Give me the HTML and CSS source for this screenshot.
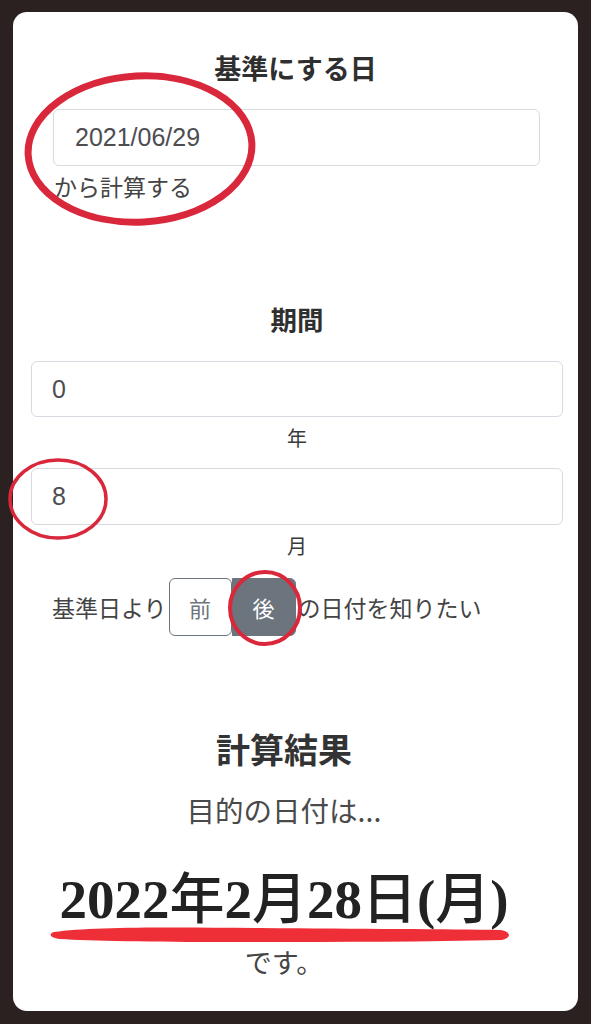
FILE: index.html
```html
<!DOCTYPE html>
<html lang="ja">
<head>
<meta charset="utf-8">
<title>日付計算</title>
<link rel="stylesheet" href="styles.css">
</head>
<body>
<div class="card">
  <section class="base">
    <h2 class="title">基準にする日</h2>
    <div class="field-narrow">
      <div class="input">2021/06/29</div>
      <p class="from">から計算する</p>
    </div>
  </section>

  <section class="period">
    <h2 class="title title-period">期間</h2>
    <div class="input input-wide first">0</div>
    <p class="unit">年</p>
    <div class="input input-wide second">8</div>
    <p class="unit">月</p>
    <div class="dir-row">
      <span>基準日より</span>
      <div class="btn-group">
        <span class="btn btn-outline">前</span>
        <span class="btn btn-active">後</span>
      </div>
      <span>の日付を知りたい</span>
    </div>
  </section>

  <section class="result">
    <h2 class="result-title">計算結果</h2>
    <p class="result-lead">目的の日付は...</p>
    <p class="result-date">2022<span class="kanji">年</span>2<span class="kanji">月</span>28<span class="kanji">日</span>(<span class="kanji">月</span>)</p>
    <p class="result-tail">です。</p>
  </section>
</div>

<svg class="marks" width="591" height="1024" viewBox="0 0 591 1024" aria-hidden="true">
  <ellipse cx="140" cy="149" rx="112" ry="73" fill="none" stroke="#d9283b" stroke-width="7" transform="rotate(-3 140 149)"/>
  <ellipse cx="58" cy="499" rx="48" ry="39" fill="none" stroke="#d9283b" stroke-width="3.5"/>
  <ellipse cx="265" cy="608" rx="35" ry="36" fill="none" stroke="#d9283b" stroke-width="4"/>
  <path d="M54 932 C 90 927, 160 927, 260 928 C 360 929, 450 929, 500 930 C 511 931, 512 938, 502 940 C 420 942, 330 942, 230 942 C 150 942, 90 941, 60 939 C 50 938, 48 934, 54 932 Z" fill="#ef2f38"/>
</svg>
</body>
</html>
```

FILE: styles.css
```css
html, body {
  margin: 0;
  padding: 0;
}

body {
  background: #2a2120;
  width: 591px;
  height: 1024px;
  overflow: hidden;
  position: relative;
  font-family: "Noto Sans CJK JP", "Liberation Sans", sans-serif;
  color: #444;
}

.card {
  margin: 12px 13px 0 13px;
  height: 999px;
  background: #fff;
  border-radius: 14px;
  box-sizing: border-box;
  padding-top: 37px;
  display: flex;
  flex-direction: column;
}

p, h2 {
  margin: 0;
}

.title {
  font-size: 27px;
  font-weight: 700;
  line-height: 38px;
  text-align: center;
  color: #2f2f2f;
}

.field-narrow {
  margin: 22px 38px 0 40px;
}

.input {
  box-sizing: border-box;
  height: 57px;
  border: 1.5px solid #d9d9e2;
  border-radius: 6px;
  font-family: "Liberation Sans", "Noto Sans CJK JP", sans-serif;
  font-size: 25px;
  color: #4d4d52;
  display: flex;
  align-items: center;
  padding-left: 21px;
}

.from {
  margin-top: 4px;
  margin-left: 1px;
  font-size: 23px;
  line-height: 32px;
  color: #444;
}

.period {
  margin: 0 15px 0 18px;
  display: flex;
  flex-direction: column;
}

.title-period {
  margin-top: 98px;
  font-size: 26.5px;
}

.input-wide {
  padding-left: 20px;
}

.input-wide.first {
  margin-top: 23px;
  height: 56px;
}

.input-wide.second {
  margin-top: 15px;
}

.unit {
  margin-top: 6px;
  font-size: 20px;
  line-height: 30px;
  text-align: center;
  color: #3a3a3a;
}

.dir-row {
  margin-top: 17px;
  padding-left: 21px;
  display: flex;
  align-items: center;
  font-size: 23px;
  color: #444;
}

.btn-group {
  display: flex;
  margin: 0 2px 0 2px;
}

.btn {
  box-sizing: border-box;
  width: 63px;
  height: 58px;
  display: flex;
  align-items: center;
  justify-content: center;
  font-size: 22px;
  border: 1.5px solid #6c757d;
}

.btn-outline {
  background: #fff;
  color: #6c757d;
  border-radius: 6px;
}

.btn-active {
  background: #6c757d;
  color: #fff;
  border-radius: 0 6px 6px 0;
  width: 64px;
}

.result {
  display: flex;
  flex-direction: column;
  align-items: center;
  padding-right: 23px;
}

.result-title {
  margin-top: 90px;
  font-size: 34px;
  font-weight: 700;
  line-height: 46px;
  color: #333;
}

.result-lead {
  margin-top: 19px;
  font-size: 28.5px;
  line-height: 38px;
  color: #4a4a4a;
}

.result-date {
  margin-top: 39px;
  font-family: "Liberation Serif", "Noto Sans CJK JP", serif;
  font-weight: 700;
  font-size: 55px;
  line-height: 64px;
  color: #222;
}

.result-date .kanji {
  font-weight: 500;
}

.result-tail {
  margin-top: 12px;
  font-size: 27px;
  line-height: 36px;
  color: #444;
}

.marks {
  position: absolute;
  left: 0;
  top: 0;
  pointer-events: none;
}
```
